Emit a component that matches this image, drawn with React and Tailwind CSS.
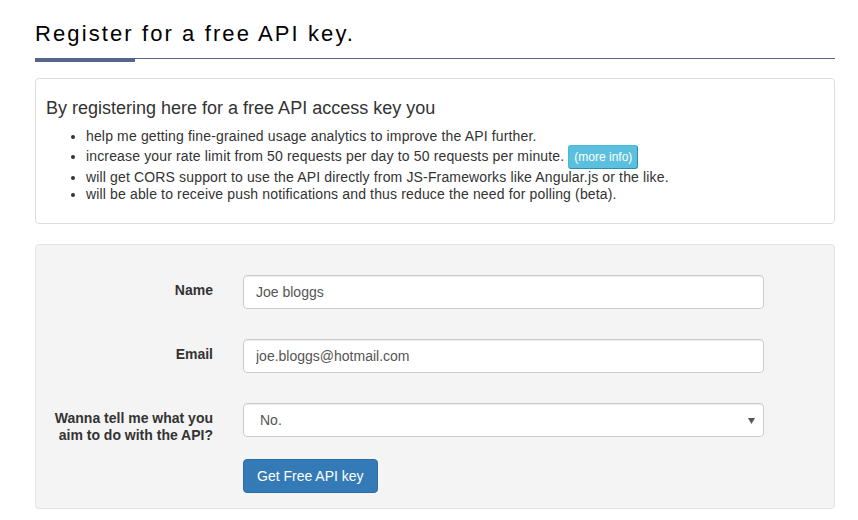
import React, { useState } from "react";

const Field = ({ label, children }) => (
  <div className="flex h-[34px] items-start">
    <label className="w-[177px] shrink-0 pt-[7px] text-right text-[14px] font-bold leading-[17px] text-[#333]">
      {label}
    </label>
    <div className="ml-[30px] w-[521px]">{children}</div>
  </div>
);

const inputCls =
  "block h-[34px] w-full rounded-[4px] border border-[#ccc] bg-white px-[12px] text-[14px] text-[#555] outline-none shadow-[inset_0_1px_1px_rgba(0,0,0,0.075)]";

const App = () => {
  const [name, setName] = useState("Joe bloggs");
  const [email, setEmail] = useState("joe.bloggs@hotmail.com");
  const [purpose, setPurpose] = useState("No.");

  return (
    <div className="h-[520px] w-[858px] overflow-hidden bg-white pl-[35px] pr-[23px] font-['Liberation_Sans',Arial,sans-serif] text-[#333]">
      <h1 className="pt-[20px] text-[22px] font-normal leading-[28px] tracking-[2.1px] text-black">
        Register for a free API key.
      </h1>
      <div className="mt-[10px] flex items-start">
        <div className="h-[4px] w-[100px] bg-[#566689]" />
        <div className="h-px flex-1 bg-[#566689]" />
      </div>

      <div className="mt-[16px] rounded-[4px] border border-[#ddd] px-[10px] pb-[20px] pt-[18px]">
        <h3 className="text-[18px] leading-[22px]">
          By registering here for a free API access key you
        </h3>
        <ul className="mt-[9px] list-disc pl-[40px] text-[14px] leading-[17px] tracking-[0.15px]">
          <li>
            help me getting fine-grained usage analytics to improve the API
            further.
          </li>
          <li>
            increase your rate limit from 50 requests per day to 50 requests
            per minute.{" "}
            <button className="inline-block rounded-[3px] border border-[#46b8da] border-b-[#2a8fb0] border-r-[#2a8fb0] bg-[#5bc0de] px-[5px] align-middle text-[12px] leading-[22px] tracking-normal text-white">
              (more info)
            </button>
          </li>
          <li>
            will get CORS support to use the API directly from JS-Frameworks
            like Angular.js or the like.
          </li>
          <li>
            will be able to receive push notifications and thus reduce the need
            for polling (beta).
          </li>
        </ul>
      </div>

      <div className="mt-[20px] rounded-[4px] border border-[#e3e3e3] bg-[#f4f4f4] pb-[15px] pt-[30px]">
        <div className="flex flex-col gap-[30px]">
          <Field label="Name">
            <input
              className={inputCls}
              value={name}
              onChange={(e) => setName(e.target.value)}
            />
          </Field>
          <Field label="Email">
            <input
              className={inputCls}
              value={email}
              onChange={(e) => setEmail(e.target.value)}
            />
          </Field>
          <Field label={<>Wanna tell me what you<br />aim to do with the API?</>}>
            <div className="relative">
              <select
                className={inputCls + " appearance-none pl-[16px]"}
                value={purpose}
                onChange={(e) => setPurpose(e.target.value)}
              >
                <option>No.</option>
                <option>Yes, build an app.</option>
              </select>
              <svg
                className="pointer-events-none absolute right-[9px] top-[15px]"
                width="7"
                height="6"
                viewBox="0 0 7 6"
              >
                <path d="M0 0h7L3.5 6z" fill="#555" />
              </svg>
            </div>
          </Field>
        </div>
        <div className="ml-[207px] mt-[22px]">
          <button className="h-[34px] rounded-[4px] border border-[#2e6da4] bg-[#337ab7] px-[13px] text-[14px] text-white">
            Get Free API key
          </button>
        </div>
      </div>
    </div>
  );
};

export default App;
